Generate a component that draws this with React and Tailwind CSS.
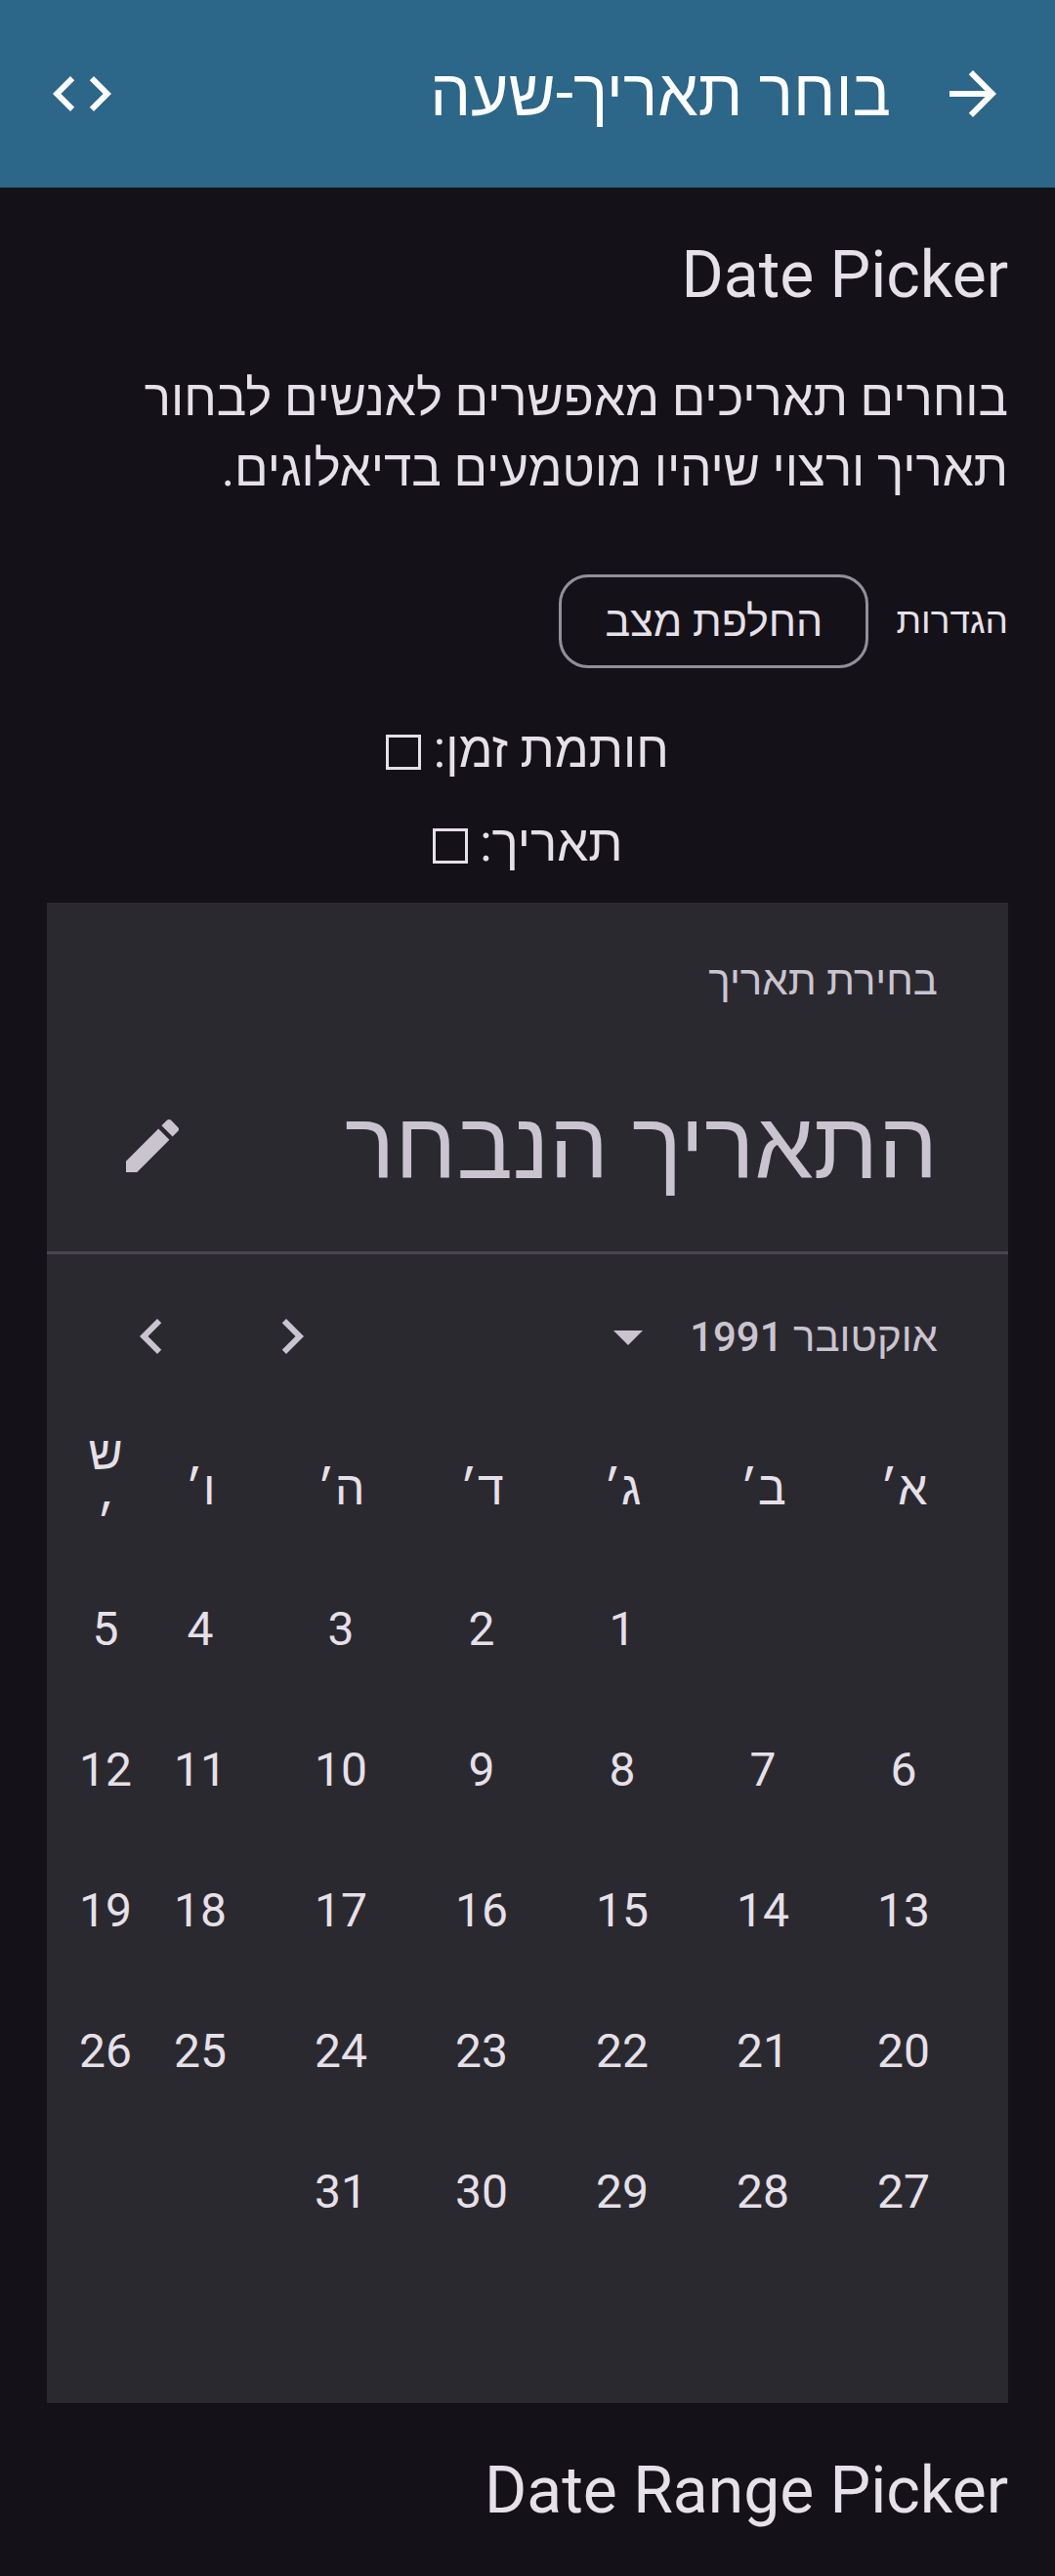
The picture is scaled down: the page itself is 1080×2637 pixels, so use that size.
const weekdays = ['א׳', 'ב׳', 'ג׳', 'ד׳', 'ה׳', 'ו׳', 'ש׳']

const weeks = [
  ['', '', '1', '2', '3', '4', '5'],
  ['6', '7', '8', '9', '10', '11', '12'],
  ['13', '14', '15', '16', '17', '18', '19'],
  ['20', '21', '22', '23', '24', '25', '26'],
  ['27', '28', '29', '30', '31', '', ''],
  ['', '', '', '', '', '', ''],
]

function MaterialIcon({ d, className }) {
  return (
    <svg viewBox="0 0 24 24" className={className} fill="currentColor">
      <path d={d} />
    </svg>
  )
}

function Checkbox() {
  return <span className="inline-block h-[36px] w-[36px] border-[3px] border-[#e6e0e9] align-[-3px]" />
}

export default function App() {
  return (
    <div dir="rtl" className="h-[2637px] overflow-hidden bg-[#141218] font-['Roboto','Liberation_Sans','Noto_Sans',sans-serif] text-[#e6e0e9]">
      <header className="flex h-[192px] items-center bg-[#2c6688] px-[48px] text-white">
        <MaterialIcon
          className="h-[72px] w-[72px] shrink-0 -scale-x-100"
          d="M20 11H7.83l5.59-5.59L12 4l-8 8 8 8 1.41-1.41L7.83 13H20v-2z"
        />
        <h1 className="mr-[48px] text-[66px] leading-[72px]">בוחר תאריך-שעה</h1>
        <MaterialIcon
          className="mr-auto h-[72px] w-[72px] shrink-0"
          d="M9.4 16.6 4.8 12l4.6-4.6L8 6l-6 6 6 6 1.4-1.4zm5.2 0 4.6-4.6-4.6-4.6L16 6l6 6-6 6-1.4-1.4z"
        />
      </header>

      <main className="px-[48px]">
        <h2 className="pt-[48px] text-[66px] leading-[84px]">Date Picker</h2>
        <p className="mt-[48px] text-[51px] leading-[72px]">
          בוחרים תאריכים מאפשרים לאנשים לבחור תאריך ורצוי שיהיו מוטמעים בדיאלוגים.
        </p>

        <div className="mt-[72px] flex items-center gap-[28px]">
          <span className="text-[37px] text-[#e6e0e9]">הגדרות</span>
          <button className="flex h-[96px] w-[317px] items-center justify-center rounded-[30px] border-[3px] border-[#938f99] text-[43px]">
            החלפת מצב
          </button>
        </div>

        <div className="mt-[36px] text-center text-[51px] leading-[96px]">
          <div>
            חותמת זמן: <Checkbox />
          </div>
          <div>
            תאריך: <Checkbox />
          </div>
        </div>

        <section className="mt-[12px] h-[1536px] bg-[#2b2930] text-[#cac4d0]">
          <div className="h-[360px] border-b-[3px] border-[#49454f] px-[72px]">
            <div className="pt-[50px] text-[42px] leading-[60px]">בחירת תאריך</div>
            <div className="mt-[79px] flex h-[120px] items-center justify-between">
              <span className="text-[96px] leading-[120px]">התאריך הנבחר</span>
              <MaterialIcon
                className="h-[72px] w-[72px]"
                d="M3 17.25V21h3.75L17.81 9.94l-3.75-3.75L3 17.25zM20.71 7.04c.39-.39.39-1.02 0-1.41l-2.34-2.34c-.39-.39-1.02-.39-1.41 0l-1.83 1.83 3.75 3.75 1.83-1.83z"
              />
            </div>
          </div>

          <div className="px-[35px]">
            <div className="flex h-[168px] items-center">
              <span className="mr-[37px] text-[42px] font-medium">אוקטובר 1991</span>
              <MaterialIcon className="mr-[27px] h-[72px] w-[72px]" d="m7 10 5 5 5-5z" />
              <MaterialIcon
                className="mr-auto h-[72px] w-[72px]"
                d="M10 6 8.59 7.41 13.17 12l-4.58 4.59L10 18l6-6z"
              />
              <MaterialIcon
                className="mr-[72px] ml-[36px] h-[72px] w-[72px]"
                d="M15.41 7.41 14 6l-6 6 6 6 1.41-1.41L10.83 12z"
              />
            </div>

            <div className="grid grid-cols-[repeat(6,144px)_50px] text-[48px] text-[#e6e0e9]">
              {weekdays.map((day) => (
                <div key={day} className="flex h-[144px] items-center justify-center px-[6px] text-center leading-[72px] break-all">
                  {day}
                </div>
              ))}
              {weeks.flat().map((day, i) => (
                <div key={i} className="flex h-[144px] items-center justify-center">
                  {day}
                </div>
              ))}
            </div>
          </div>
        </section>

        <h2 className="pt-[48px] text-[66px] leading-[84px]">Date Range Picker</h2>
      </main>
    </div>
  )
}
